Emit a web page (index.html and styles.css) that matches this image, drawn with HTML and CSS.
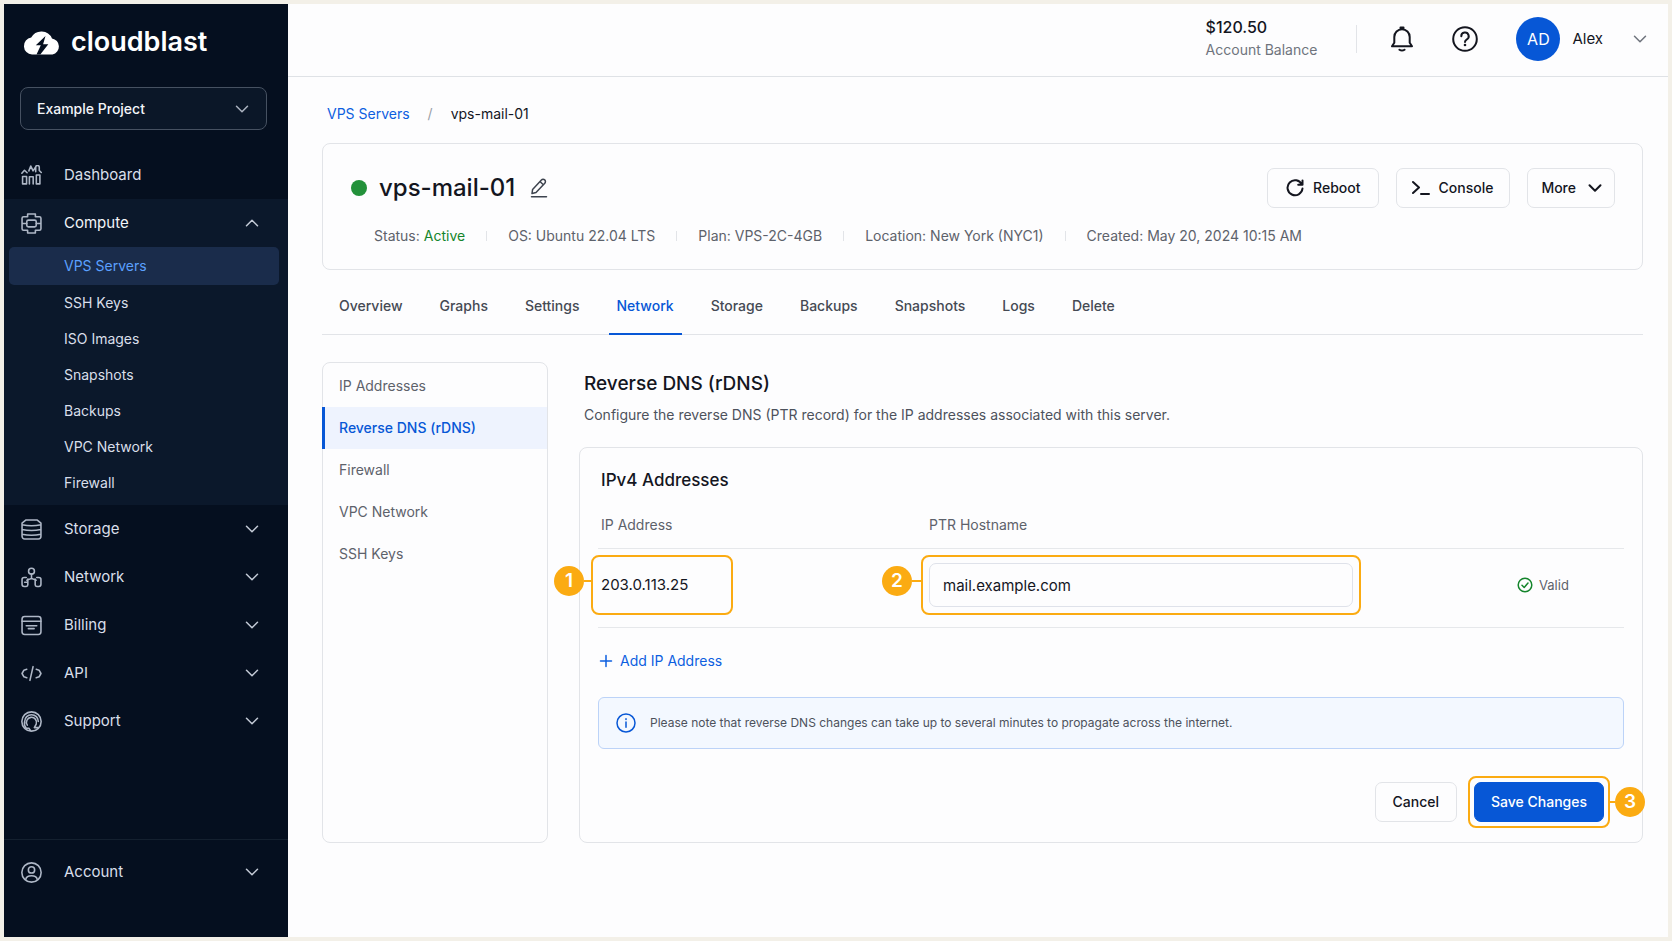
FILE: index.html
```
<!DOCTYPE html>
<html lang="en">

<head>
    <meta charset="UTF-8">
    <meta name="viewport" content="width=device-width, initial-scale=1.0">
    <title>vps-mail-01 - Reverse DNS - cloudblast</title>
    <link rel="stylesheet" href="styles.css">
</head>

<body>
    <!-- Shared icons -->
    <svg class="sprite" aria-hidden="true">
        <symbol id="chevron" viewBox="0 0 14 14">
            <path d="M1.5 4.2 7 9.8l5.5-5.6" />
        </symbol>
    </svg>

    <div class="app">
        <aside class="sidebar">
            <a class="logo" href="#">
                <svg width="38" height="25" viewBox="0 0 38 25" aria-hidden="true">
                    <path fill="#fff" d="M9 24.5A8.5 8.5 0 0 1 8.2 7.6 11.5 11.5 0 0 1 29 8.4a8.2 8.2 0 0 1 .5 16.1z" />
                    <path fill="#050f1f" d="m22.5 6-9.7 9.3h5l-4.3 9.2h3.800l8-10.300h-5.200z" />
                </svg>
                <span>cloudblast</span>
            </a>

            <div class="project">
                <select aria-label="Project">
                    <option>Example Project</option>
                </select>
                <svg class="chevron"><use href="#chevron" /></svg>
            </div>

            <nav class="menu">
                <a class="menu-item" href="#">
                    <svg class="icon" viewBox="0 0 20 20">
                        <path d="M1.5 11h3.8v7H1.500zM8 18v-6.800h3.600V18M14.600 9.500h3.400V18h-3.400zM.8 7.800 3.300 5l2.500 2.400M7.500 5.600 9.300 1l2.200 4.600 2.300-3.400M14 6.500V2.200A1.600 1.600 0 0 1 17.400 2.200v3l1.900 1.900" />
                    </svg>
                    <span>Dashboard</span>
                </a>

                <div class="menu-group">
                    <button class="menu-item" type="button" aria-expanded="true">
                        <svg class="icon" viewBox="0 0 20 20">
                            <path d="M6.300 3.500V.9h7.400v2.600M6.300 16.500v2.600h7.400v-2.600M6.300 3.500H2.500A1.500 1.500 0 0 0 1 5v10a1.500 1.500 0 0 0 1.500 1.500h3.800M13.700 3.500h3.800A1.500 1.500 0 0 1 19 5v10a1.500 1.500 0 0 1-1.500 1.500h-3.800M1 10h4.500M14.500 10H19" />
                            <rect x="5.5" y="6.8" width="9" height="6.4" rx="1.5" />
                        </svg>
                        <span>Compute</span>
                        <svg class="chevron up"><use href="#chevron" /></svg>
                    </button>
                    <ul class="submenu">
                        <li><a class="active" href="#">VPS Servers</a></li>
                        <li><a href="#">SSH Keys</a></li>
                        <li><a href="#">ISO Images</a></li>
                        <li><a href="#">Snapshots</a></li>
                        <li><a href="#">Backups</a></li>
                        <li><a href="#">VPC Network</a></li>
                        <li><a href="#">Firewall</a></li>
                    </ul>
                </div>

                <button class="menu-item" type="button">
                    <svg class="icon" viewBox="0 0 20 20">
                        <path d="M4.500 1h11L19 4v12.500a2.500 2.500 0 0 1-2.500 2.500h-13A2.500 2.500 0 0 1 1 16.500V4zM1 5.500q9 2 18 0M1 10q9 2 18 0M1 14.500q9 2 18 0" />
                    </svg>
                    <span>Storage</span>
                    <svg class="chevron"><use href="#chevron" /></svg>
                </button>
                <button class="menu-item" type="button">
                    <svg class="icon" viewBox="0 0 20 20">
                        <circle cx="10" cy="4" r="2.8" />
                        <path d="M10 6.800v4.200M5.500 12.500 10 11l4.500 1.500M5 10H3a2 2 0 0 0-2 2v4.500a2 2 0 0 0 2 2h2A1.500 1.500 0 0 0 6.500 17v-5.500M3.500 14.500h3M15 10h2a2 2 0 0 1 2 2v4.500a2 2 0 0 1-2 2h-2a1.500 1.500 0 0 1-1.500-1.500v-5.500" />
                    </svg>
                    <span>Network</span>
                    <svg class="chevron"><use href="#chevron" /></svg>
                </button>
                <button class="menu-item" type="button">
                    <svg class="icon" viewBox="0 0 20 20">
                        <rect x="1" y="1.5" width="18" height="17" rx="2.5" />
                        <path d="M1 6h18M5 10.200h10M7 13h5.500" />
                    </svg>
                    <span>Billing</span>
                    <svg class="chevron"><use href="#chevron" /></svg>
                </button>
                <button class="menu-item" type="button">
                    <svg class="icon" viewBox="0 0 20 20">
                        <path d="M5.500 6 2.800 6.800 1 10l1.800 3.200 2.700.8M14.500 6l2.700.8L19 10l-1.800 3.200-2.700.8M11.500 3.500l-3 13" />
                    </svg>
                    <span>API</span>
                    <svg class="chevron"><use href="#chevron" /></svg>
                </button>
                <button class="menu-item" type="button">
                    <svg class="icon" viewBox="0 0 20 20">
                        <circle cx="10" cy="10" r="9.2" />
                        <path d="M5 16.500A7 7 0 0 1 3.500 10a6.500 6.500 0 0 1 13 0M6 13.500a4.800 4.800 0 1 1 8.500-1l-1.800 3.300h3.300M5 16.500h2.500l1.500 2" />
                    </svg>
                    <span>Support</span>
                    <svg class="chevron"><use href="#chevron" /></svg>
                </button>
            </nav>

            <div class="account">
                <button class="menu-item" type="button">
                    <svg class="icon" viewBox="0 0 20 20">
                        <circle cx="10" cy="10" r="9.2" />
                        <circle cx="10" cy="7.5" r="3" />
                        <path d="M4.500 16.500c1-4.500 10-4.500 11 0" />
                    </svg>
                    <span>Account</span>
                    <svg class="chevron"><use href="#chevron" /></svg>
                </button>
            </div>
        </aside>

        <div class="main">
            <header class="topbar">
                <div class="balance">
                    <strong>$120.50</strong>
                    <span>Account Balance</span>
                </div>
                <button class="icon-btn" type="button" aria-label="Notifications">
                    <svg width="26" height="26" viewBox="0 0 26 26">
                        <path d="M3 20.300h20l-2.300-3.600V11a7.700 7.700 0 0 0-15.400 0v5.700zM11.500 2.800V1.500h3v1.300" />
                        <path d="M10.500 23.700q2.500 1.800 5 0" />
                    </svg>
                </button>
                <button class="icon-btn" type="button" aria-label="Help">
                    <svg width="26" height="26" viewBox="0 0 26 26">
                        <circle cx="13" cy="13" r="11.8" />
                        <path d="M9.300 10.300a3.700 3.700 0 1 1 5.300 3.300c-1.100.6-1.600 1.100-1.600 2.400" />
                        <circle class="dot" cx="13" cy="19" r="1.3" />
                    </svg>
                </button>
                <button class="user" type="button">
                    <span class="avatar">AD</span>
                    <span>Alex</span>
                    <svg class="chevron"><use href="#chevron" /></svg>
                </button>
            </header>

            <main class="content">
                <nav class="breadcrumb" aria-label="Breadcrumb">
                    <a href="#">VPS Servers</a>
                    <span class="slash">/</span>
                    <span>vps-mail-01</span>
                </nav>

                <section class="card server">
                    <div class="server-top">
                        <span class="status-dot"></span>
                        <h1>vps-mail-01</h1>
                        <button class="edit" type="button" aria-label="Rename server">
                            <svg width="18" height="20" viewBox="0 0 18 20">
                                <path d="M2 15.500 2.600 11.400 11.400 2a2.300 2.300 0 0 1 3.400 3.200L6 14.500zM10 3.500l3.300 3.200M1.500 18.800h15" />
                            </svg>
                        </button>
                        <div class="actions">
                            <button class="btn reboot" type="button">
                                <svg width="18" height="18" viewBox="0 0 18 18">
                                    <path d="M15.800 5.500A7.500 7.500 0 1 0 16.500 9.500M16.500 1.500v4.300h-4.300" />
                                </svg>
                                Reboot
                            </button>
                            <button class="btn console" type="button">
                                <svg width="18" height="18" viewBox="0 0 18 18">
                                    <path d="m1 3 6 5.500L1 14M9 15h8" />
                                </svg>
                                Console
                            </button>
                            <button class="btn more" type="button">
                                More
                                <svg class="chevron"><use href="#chevron" /></svg>
                            </button>
                        </div>
                    </div>
                    <ul class="meta">
                        <li>Status: <span class="ok">Active</span></li>
                        <li>OS: Ubuntu 22.04 LTS</li>
                        <li>Plan: VPS-2C-4GB</li>
                        <li>Location: New York (NYC1)</li>
                        <li>Created: May 20, 2024 10:15 AM</li>
                    </ul>
                </section>

                <nav class="tabs">
                    <a href="#">Overview</a>
                    <a href="#">Graphs</a>
                    <a href="#">Settings</a>
                    <a class="active" href="#">Network</a>
                    <a href="#">Storage</a>
                    <a href="#">Backups</a>
                    <a href="#">Snapshots</a>
                    <a href="#">Logs</a>
                    <a href="#">Delete</a>
                </nav>

                <div class="columns">
                    <nav class="card side-nav">
                        <a href="#">IP Addresses</a>
                        <a class="active" href="#">Reverse DNS (rDNS)</a>
                        <a href="#">Firewall</a>
                        <a href="#">VPC Network</a>
                        <a href="#">SSH Keys</a>
                    </nav>

                    <section class="rdns">
                        <h2>Reverse DNS (rDNS)</h2>
                        <p class="lead">Configure the reverse DNS (PTR record) for the IP addresses associated with this server.</p>

                        <form class="card rdns-form">
                            <h3>IPv4 Addresses</h3>
                            <table>
                                <thead>
                                    <tr>
                                        <th class="col-ip">IP Address</th>
                                        <th><label for="ptr">PTR Hostname</label></th>
                                        <th class="col-state"></th>
                                    </tr>
                                </thead>
                                <tbody>
                                    <tr>
                                        <td>
                                            <div class="step step-ip">
                                                203.0.113.25
                                                <span class="step-number">1</span>
                                            </div>
                                        </td>
                                        <td>
                                            <div class="step step-ptr">
                                                <input type="text" id="ptr" name="ptr" value="mail.example.com">
                                                <span class="step-number">2</span>
                                            </div>
                                        </td>
                                        <td>
                                            <span class="valid">
                                                <svg width="16" height="16" viewBox="0 0 16 16">
                                                    <circle cx="8" cy="8" r="6.8" />
                                                    <path d="m5 8.300 2.200 2.200L11 6" />
                                                </svg>
                                                Valid
                                            </span>
                                        </td>
                                    </tr>
                                </tbody>
                            </table>

                            <button class="add" type="button">
                                <svg width="14" height="14" viewBox="0 0 14 14">
                                    <path d="M7 1.500v11M1.500 7h11" />
                                </svg>
                                Add IP Address
                            </button>

                            <div class="note">
                                <svg width="20" height="20" viewBox="0 0 20 20">
                                    <circle cx="10" cy="10" r="9" />
                                    <path d="M10 9v5.200M10 5.800v.6" />
                                </svg>
                                Please note that reverse DNS changes can take up to several minutes to propagate across the internet.
                            </div>

                            <div class="form-actions">
                                <button class="btn" type="button">Cancel</button>
                                <div class="step step-save">
                                    <button class="btn primary" type="submit">Save Changes</button>
                                    <span class="step-number">3</span>
                                </div>
                            </div>
                        </form>
                    </section>
                </div>
            </main>
        </div>
    </div>
</body>

</html>
```
FILE: styles.css
```
* {
    margin: 0;
    padding: 0;
    box-sizing: border-box;
}

body {
    font-family: Inter, "Liberation Sans", sans-serif;
    font-size: 14px;
    line-height: 20px;
    color: #14161f;
    background: #f3f0e8;
    padding: 4px;
}

a {
    color: inherit;
    text-decoration: none;
}

ul {
    list-style: none;
}

button,
input,
select {
    font: inherit;
    color: inherit;
    background: none;
    border: none;
}

button {
    cursor: pointer;
}

svg {
    flex: none;
    fill: none;
    stroke: currentColor;
    stroke-width: 1.5;
    stroke-linecap: round;
    stroke-linejoin: round;
}

.sprite {
    position: absolute;
    width: 0;
    height: 0;
}

.chevron {
    width: 14px;
    height: 14px;
}

.chevron.up {
    transform: rotate(180deg);
}

.app {
    display: flex;
    min-height: calc(100vh - 8px);
    background: #fdfdfe;
}

/* Sidebar */
.sidebar {
    width: 284px;
    flex: none;
    display: flex;
    flex-direction: column;
    background: #050f1f;
    color: #d9dfea;
    padding-bottom: 41px;
}

.logo {
    display: flex;
    align-items: center;
    gap: 10px;
    height: 76px;
    padding-left: 19px;
    color: #fff;
    font-size: 27px;
    line-height: 32px;
    font-weight: 600;
}

.logo svg {
    stroke: none;
}

.project {
    position: relative;
    margin: 7px 21px 21px 16px;
}

.project select {
    appearance: none;
    width: 100%;
    height: 43px;
    padding: 0 16px;
    border: 1px solid #465161;
    border-radius: 8px;
    background: #0b1728;
    color: #f3f5f9;
    font-weight: 500;
}

.project .chevron {
    position: absolute;
    top: 15px;
    right: 18px;
    color: #aab2bf;
    pointer-events: none;
}

.menu-item {
    display: flex;
    align-items: center;
    gap: 22px;
    width: 100%;
    height: 48px;
    padding: 0 29px 0 17px;
    font-size: 15px;
    text-align: left;
}

.menu-item .icon {
    width: 21px;
    height: 21px;
    color: #aeb7c6;
}

.menu-item .chevron {
    margin-left: auto;
    color: #c3cad6;
}

.menu-group {
    background: #0b182b;
    padding-bottom: 4px;
}

.menu-group .menu-item {
    color: #f3f5f9;
}

.submenu {
    padding: 0 9px 0 5px;
}

.submenu a {
    display: block;
    padding: 8px 0 8px 55px;
    border-radius: 5px;
}

.submenu .active {
    background: #1a2c4b;
    color: #5ba0ff;
    padding-top: 9px;
    padding-bottom: 9px;
}

.account {
    margin-top: auto;
    padding-top: 8px;
    border-top: 1px solid #14202f;
}

/* Top bar */
.main {
    flex: 1;
    min-width: 0;
}

.topbar {
    display: flex;
    align-items: center;
    justify-content: flex-end;
    height: 73px;
    padding: 0 21px 3px 0;
    border-bottom: 1px solid #dfe2e6;
}

.balance {
    display: flex;
    flex-direction: column;
    gap: 3px;
    padding-right: 39px;
}

.balance strong {
    font-size: 16px;
    font-weight: 500;
}

.balance span {
    color: #6f747d;
}

.icon-btn {
    display: flex;
    margin-left: 37px;
}

.icon-btn svg {
    stroke-width: 2;
}

.icon-btn .dot {
    fill: currentColor;
    stroke: none;
}

.balance + .icon-btn {
    margin-left: 0;
    padding: 1px 0 1px 32px;
    border-left: 1px solid #e2e4e8;
}

.user {
    display: flex;
    align-items: center;
    gap: 12px;
    margin-left: 38px;
    font-size: 15px;
}

.avatar {
    width: 44px;
    height: 44px;
    border-radius: 50%;
    background: #0757d6;
    color: #fff;
    font-size: 16px;
    line-height: 44px;
}

.user .chevron {
    margin-left: 18px;
    color: #6f747d;
}

/* Page content */
.content {
    padding: 27px 25px 20px 34px;
}

.card {
    border: 1px solid #e2e4e8;
    border-radius: 8px;
}

.breadcrumb {
    display: flex;
    gap: 18px;
    padding-left: 5px;
    margin-bottom: 19px;
}

.breadcrumb a {
    color: #0d5fe0;
}

.breadcrumb .slash {
    color: #9a9fa8;
}

.server {
    padding: 24px 27px 23px 28px;
}

.server-top {
    display: flex;
    align-items: center;
}

.status-dot {
    width: 16px;
    height: 16px;
    border-radius: 50%;
    background: #23913a;
}

h1 {
    margin: 0 15px 0 12px;
    font-size: 24px;
    line-height: 32px;
    font-weight: 500;
}

.edit {
    display: flex;
    color: #3d434e;
}

.actions {
    display: flex;
    gap: 17px;
    margin-left: auto;
}

.btn {
    display: flex;
    align-items: center;
    gap: 9px;
    height: 40px;
    padding: 0 17px;
    border: 1px solid #e2e4e8;
    border-radius: 7px;
    font-weight: 500;
}

.btn svg {
    stroke-width: 2;
}

.btn.reboot {
    padding: 0 18px;
}

.btn.console {
    gap: 8px;
    padding: 0 16px 0 15px;
}

.btn.more {
    gap: 12px;
    padding: 0 12px 0 13px;
}

.meta {
    display: flex;
    flex-wrap: wrap;
    padding-left: 23px;
    margin-top: 18px;
    color: #5d626b;
}

.meta li {
    display: flex;
    gap: 4px;
    align-items: center;
}

.meta li + li::before {
    content: "";
    width: 1px;
    height: 10px;
    margin: 0 17px 0 21px;
    background: #e2e4e8;
}

.meta .ok {
    color: #15852c;
}

.tabs {
    display: flex;
    gap: 21px;
    padding-left: 9px;
    border-bottom: 1px solid #e2e4e8;
    color: #454a54;
    font-weight: 500;
}

.tabs a {
    padding: 26px 8px 17px;
    border-bottom: 2px solid transparent;
    margin-bottom: -1px;
}

.tabs .active {
    color: #0757d6;
    border-color: #0757d6;
}

.columns {
    display: grid;
    grid-template-columns: 226px 1fr;
    gap: 31px;
    margin-top: 27px;
}

.side-nav {
    padding-top: 2px;
    color: #5d626b;
}

.side-nav a {
    display: block;
    padding: 11px 16px;
}

.side-nav .active {
    margin-left: -1px;
    padding-left: 14px;
    border-left: 3px solid #0757d6;
    background: #eef3fe;
    color: #0757d6;
    font-weight: 500;
}

h2 {
    padding: 9px 5px 0;
    font-size: 19px;
    line-height: 26px;
    font-weight: 500;
}

.lead {
    padding: 8px 5px 22px;
    color: #4d525c;
}

.rdns-form {
    padding: 19px 18px 20px;
}

h3 {
    padding-left: 3px;
    font-size: 17px;
    line-height: 26px;
    font-weight: 500;
}

table {
    width: 100%;
    table-layout: fixed;
    border-collapse: collapse;
}

th,
td {
    padding: 22px 3px 13px;
    border-bottom: 1px solid #e6e8eb;
    text-align: left;
    font-weight: 400;
}

th {
    color: #5d626b;
}

td {
    padding: 14px 3px 20px;
    font-size: 15px;
}

.col-ip {
    width: 328px;
}

.col-state {
    width: 110px;
}

input {
    display: block;
    width: 100%;
    height: 44px;
    padding: 0 13px;
    border: 1px solid #dfe2ea;
    border-radius: 7px;
}

/* Numbered guide steps: an orange frame around a control, with a badge */
.step {
    position: relative;
}

.step::before {
    content: "";
    position: absolute;
    inset: -8px;
    border: 2px solid #fbab12;
    border-radius: 8px;
    pointer-events: none;
}

.step-number {
    position: absolute;
    top: 3px;
    left: -47px;
    width: 30px;
    height: 30px;
    border-radius: 50%;
    background: #fbab12;
    color: #fff;
    font-size: 19px;
    line-height: 30px;
    font-weight: 600;
    text-align: center;
}

.step-number::after {
    content: "";
    position: absolute;
    top: 14px;
    left: 100%;
    width: 9px;
    height: 2px;
    background: #fbab12;
}

.step-ip {
    width: 124px;
    line-height: 44px;
}

.step-ip::before {
    left: -10px;
}

.step-ptr {
    max-width: 424px;
}

.valid {
    display: flex;
    align-items: center;
    gap: 6px;
    font-size: 13px;
    color: #5d626b;
}

.valid svg {
    color: #15852c;
}

.add {
    display: flex;
    align-items: center;
    gap: 7px;
    margin: 23px 0 26px 1px;
    color: #0d5fe0;
}

.note {
    display: flex;
    align-items: center;
    gap: 14px;
    padding: 15px 17px;
    border: 1px solid #bcd3f8;
    border-radius: 6px;
    background: #f3f8ff;
    color: #4d525c;
    font-size: 12px;
}

.note svg {
    color: #0757d6;
}

.form-actions {
    display: flex;
    justify-content: flex-end;
    gap: 17px;
    padding-right: 20px;
    margin-top: 33px;
}

.btn.primary {
    padding: 0 16px;
    border-color: #0757d6;
    background: #0757d6;
    color: #fff;
}

.step-save::before {
    inset: -6px;
}

.step-save .step-number {
    top: 5px;
    left: auto;
    right: -41px;
}

.step-save .step-number::after {
    left: auto;
    right: 100%;
    width: 7px;
}
```
